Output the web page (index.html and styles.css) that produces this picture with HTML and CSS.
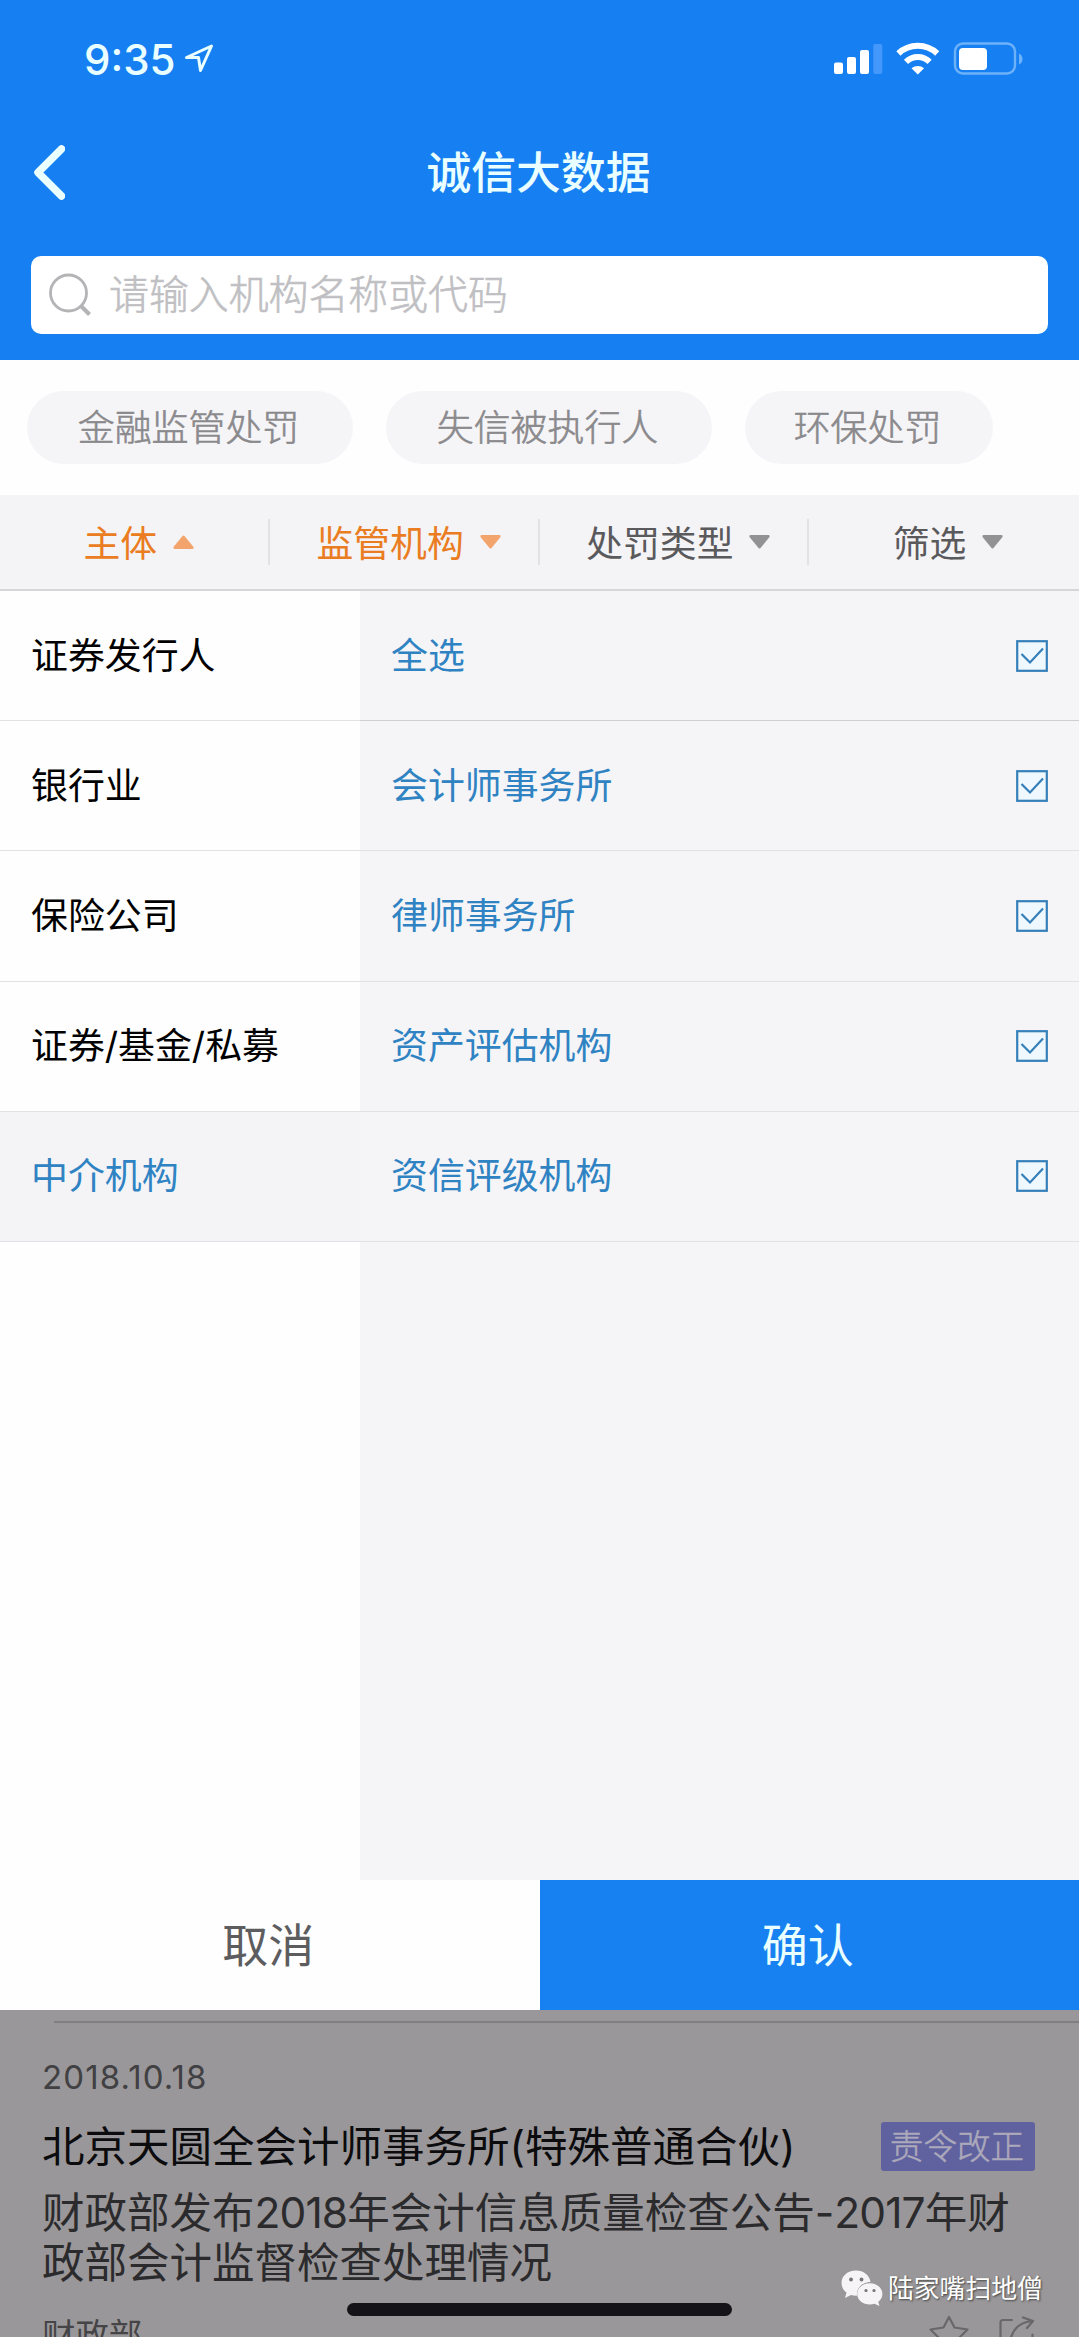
FILE: index.html
```html
<!DOCTYPE html>
<html lang="zh-CN">
<head>
<meta charset="utf-8">
<title>诚信大数据</title>
<link rel="stylesheet" href="styles.css">
</head>
<body>
<svg class="defs" width="0" height="0">
  <symbol id="check" viewBox="0 0 32 32">
    <rect x="1.2" y="1.2" width="29.6" height="29.6" fill="#eff8fe" stroke="#3580b9" stroke-width="2.2"/>
    <path d="M5.5 14 14 22.5 27 8.500" fill="none" stroke="#3580b9" stroke-width="2.2"/>
  </symbol>
</svg>
<div class="screen">
  <header class="header">
    <div class="status">
      <div class="status-left">
        <span class="time">9:35</span>
        <svg class="location" width="30" height="29" viewBox="0 0 30 29" fill="none" stroke="#eaffff" stroke-width="3" stroke-linejoin="round"><path d="M27.500 2 2.500 13.500H14.500L16.500 26.500Z"/></svg>
      </div>
      <svg class="signals" width="189" height="34" viewBox="0 0 189 34">
        <g fill="#fff">
          <rect x="0" y="20.500" width="9" height="11.500" rx="2"/>
          <rect x="13" y="15" width="9" height="17" rx="2"/>
          <rect x="26" y="8" width="9" height="24" rx="2"/>
        </g>
        <rect x="39.300" y="2" width="9" height="30" rx="2" fill="#4598fb"/>
        <g fill="none" stroke="#fff" stroke-width="6">
          <path d="M64.400 11.500A28.300 28.300 0 0 1 103.200 11.500"/>
          <path d="M72 19.800A17 17 0 0 1 95.600 19.800"/>
        </g>
        <path d="M77.500 26.300A9.500 9.500 0 0 1 90.100 26.300L83.800 32.500Z" fill="#fff"/>
        <rect x="121" y="1.500" width="60" height="30" rx="8" fill="none" stroke="#6db1f9" stroke-width="2.400"/>
        <rect x="125" y="6" width="28" height="22" rx="4" fill="#fff"/>
        <path d="M185 11.500Q188.500 13 188.500 17T185 22.500Z" fill="#6db1f9"/>
      </svg>
    </div>
    <div class="navbar">
      <svg class="back" width="34" height="60" viewBox="0 0 34 60" fill="none" stroke="#eaffff" stroke-width="7.500" stroke-linecap="round" stroke-linejoin="round"><path d="M30.500 6 7 29.500 30.500 53"/></svg>
      <h1 class="title">诚信大数据</h1>
    </div>
    <div class="search">
      <svg class="search-icon" width="44" height="44" viewBox="0 0 44 44" fill="none" stroke="#b4b4b6" stroke-width="2.800"><circle cx="20.500" cy="20" r="18"/><path d="M33 33 41.500 41.500" stroke-width="4"/></svg>
      <span class="placeholder">请输入机构名称或代码</span>
    </div>
  </header>

  <div class="chips">
    <span class="chip chip-long">金融监管处罚</span>
    <span class="chip chip-long">失信被执行人</span>
    <span class="chip">环保处罚</span>
  </div>

  <nav class="tabs">
    <div class="tab active"><span>主体</span><svg class="arrow" viewBox="0 0 21 14"><path d="M9.500 1Q10.500 0 11.500 1L20.500 12Q21 14 19.500 14H1.500Q0 14 .5 12Z"/></svg></div>
    <div class="tab active"><span>监管机构</span><svg class="arrow" viewBox="0 0 21 14"><path d="M9.500 13Q10.500 14 11.500 13L20.500 2Q21 0 19.500 0H1.500Q0 0 .5 2Z"/></svg></div>
    <div class="tab"><span>处罚类型</span><svg class="arrow" viewBox="0 0 21 14"><path d="M9.500 13Q10.500 14 11.500 13L20.500 2Q21 0 19.500 0H1.500Q0 0 .5 2Z"/></svg></div>
    <div class="tab"><span>筛选</span><svg class="arrow" viewBox="0 0 21 14"><path d="M9.500 13Q10.500 14 11.500 13L20.500 2Q21 0 19.500 0H1.500Q0 0 .5 2Z"/></svg></div>
  </nav>

  <div class="panel">
    <div class="categories">
      <div class="row"><span>证券发行人</span></div>
      <div class="row"><span>银行业</span></div>
      <div class="row"><span>保险公司</span></div>
      <div class="row"><span>证券/基金/私募</span></div>
      <div class="row selected"><span>中介机构</span></div>
    </div>
    <div class="options">
      <div class="row first"><span>全选</span><svg class="check"><use href="#check"/></svg></div>
      <div class="row"><span>会计师事务所</span><svg class="check"><use href="#check"/></svg></div>
      <div class="row"><span>律师事务所</span><svg class="check"><use href="#check"/></svg></div>
      <div class="row"><span>资产评估机构</span><svg class="check"><use href="#check"/></svg></div>
      <div class="row"><span>资信评级机构</span><svg class="check"><use href="#check"/></svg></div>
    </div>
  </div>

  <div class="actions">
    <div class="cancel">取消</div>
    <div class="confirm">确认</div>
  </div>

  <section class="feed">
    <div class="rule"></div>
    <div class="date">2018.10.18</div>
    <div class="headline"><span class="company">北京天圆全会计师事务所(特殊普通合伙)</span><span class="tag">责令改正</span></div>
    <div class="desc">财政部发布<span class="num">2018</span>年会计信息质量检查公告-<span class="num">2017</span>年财<br>政部会计监督检查处理情况</div>
    <div class="meta">
      <span class="source">财政部</span>
      <svg class="meta-icons" width="108" height="40" viewBox="0 0 108 40" fill="none" stroke="#69676a" stroke-width="2.200" stroke-linejoin="round" stroke-linecap="round">
        <path d="M20 2 25.500 12.500 38.500 14.500 29.500 23.500 31.500 36 20 30.500 8.500 36 10.500 23.500 1.500 14.500 14.500 12.500Z"/>
        <path d="M83 5H74Q71.500 5 71.500 7.500V34Q71.500 36.500 74 36.500H101Q103.500 36.500 103.500 34V19.500M81 27Q84 8 103 6M94 2.500 104 6 98 13"/>
      </svg>
    </div>
  </section>

  <div class="home-bar"></div>
  <div class="watermark">
    <svg width="42" height="36" viewBox="0 0 42 36">
      <path fill="#f6f4f7" d="M15 .5C6.500.5.5 6 .5 13c0 4 2 7.300 5 9.500L4 28l6-3q2.500.8 6 .7C15 18 21.500 12 29.500 12 28.500 5 22.500.5 15 .5Z"/>
      <path fill="#f6f4f7" d="M28.800 13.300c-7 0-12.600 4.700-12.600 10.600s5.600 10.500 12.600 10.500q2.500 0 4.700-.7l5 2.300-1.300-4.200c2.700-2 4.200-4.800 4.200-7.900 0-5.900-5.600-10.600-12.600-10.600Z"/>
      <g fill="#77757a"><circle cx="10" cy="9.500" r="1.900"/><circle cx="20.500" cy="9.500" r="1.900"/><circle cx="25" cy="20.500" r="1.600"/><circle cx="33" cy="20.500" r="1.600"/></g>
    </svg>
    <span>陆家嘴扫地僧</span>
  </div>
</div>
</body>
</html>
```
FILE: styles.css
```css
* { box-sizing: border-box; }

body {
  margin: 0;
  font-family: Inter, "Noto Sans CJK SC", sans-serif;
  color: #000;
}

.defs { position: absolute; }

.screen {
  position: relative;
  width: 1079px;
  height: 2337px;
  overflow: hidden;
  background: #fefefe;
  display: flex;
  flex-direction: column;
}

.header {
  height: 360px;
  flex: none;
  background: #1680f2;
  padding: 0 31px;
}

.status {
  height: 118px;
  display: flex;
  justify-content: space-between;
  padding: 42px 25px 0 53px;
}
.status-left { display: flex; gap: 11px; }
.time {
  height: 34px;
  line-height: 35px;
  font-size: 42px;
  font-weight: 500;
  width: 89px;
  white-space: nowrap;
  color: #eaffff;
}
.location { margin-top: 2px; }

.navbar {
  height: 109px;
  display: grid;
  grid-template-columns: 34px 1fr 36px;
  align-items: center;
}
.title {
  margin: 0;
  font-size: 44.8px;
  line-height: 60px;
  font-weight: 500;
  text-align: center;
  color: #eaffff;
}

.search {
  margin-top: 28.5px;
  height: 78.5px;
  border-radius: 10px;
  background: #fff;
  display: flex;
  align-items: center;
  gap: 17px;
  padding-left: 17px;
}
.placeholder {
  font-size: 39.9px;
  line-height: 60px;
  font-weight: 300;
  color: #bfbfc3;
  -webkit-text-stroke: .6px #bfbfc3;
}

.chips {
  height: 135px;
  flex: none;
  display: flex;
  gap: 33px;
  padding: 31px 27px 0;
}
.chip {
  width: 248px;
  height: 73px;
  border-radius: 37px;
  background: #f5f4f7;
  color: #8a898c;
  font-size: 36.9px;
  line-height: 74px;
  font-weight: 300;
  -webkit-text-stroke: .6px #8a898c;
  text-align: center;
  padding-right: 3px;
}
.chip-long { width: 326px; }

.tabs {
  height: 96px;
  flex: none;
  display: grid;
  grid-template-columns: repeat(4, 1fr);
  align-items: center;
  background: #f4f3f6;
  border-bottom: 2px solid #d6d5d9;
}
.tab {
  height: 46px;
  display: flex;
  align-items: center;
  justify-content: center;
  gap: 16px;
  padding-left: 10px;
  font-size: 36.8px;
  color: #5a595c;
  border-right: 2px solid #e2e1e5;
}
.tab span { padding-bottom: 3px; }
.tab:last-child { border-right-color: transparent; }
.tab.active { color: #ea7c22; }
.arrow { width: 21px; height: 14px; fill: #929194; }
.active .arrow { fill: #f3a46c; }

.panel {
  height: 1289px;
  flex: none;
  display: grid;
  grid-template-columns: 360px 1fr;
}
.options { background: #f5f4f6; color: #2f83c3; }
.row {
  height: 130.200px;
  display: flex;
  align-items: center;
  justify-content: space-between;
  padding: 0 31px;
  font-size: 36.9px;
  border-bottom: 1.500px solid #e2e1e5;
}
.row span { padding-bottom: 6px; }
.row.first { border-bottom-color: #cfced2; }
.row.selected { background: #f4f3f6; color: #2f83c3; }
.check { width: 32px; height: 32px; }

.actions {
  height: 130px;
  flex: none;
  display: grid;
  grid-template-columns: 1fr 1fr;
  font-size: 46px;
  line-height: 130px;
  text-align: center;
}
.actions div { padding-right: 3px; }
.cancel { background: #fefefe; color: #5d5c5e; }
.confirm { background: #1781f1; color: #eaffff; }

.feed {
  flex: 1;
  background: #999799;
  padding: 11px 42px 0;
  white-space: nowrap;
}
.rule { height: 2px; margin: 0 -42px 0 12px; background: #807e81; }
.date {
  margin-top: 34px;
  height: 40px;
  line-height: 40px;
  font-size: 33px;
  letter-spacing: 1.1px;
  color: #414043;
}
.headline {
  margin-top: 12.500px;
  height: 74px;
  display: flex;
  align-items: center;
  justify-content: space-between;
  padding-right: 2px;
  font-size: 42.500px;
  color: #0c0b0d;
}
.company { padding-bottom: 7px; }
.tag {
  width: 154px;
  height: 49px;
  line-height: 49px;
  border-radius: 3px;
  background: #6062a0;
  color: #aba9ba;
  font-size: 33.600px;
  font-weight: 300;
  -webkit-text-stroke: .5px #aba9ba;
  text-align: center;
  padding-right: 2px;
}
.desc {
  margin-top: 4.500px;
  font-size: 42.500px;
  line-height: 49.800px;
  color: #2b2a2c;
}
.num { letter-spacing: -.9px; }
.meta {
  margin-top: 24px;
  display: flex;
  justify-content: space-between;
}
.source { font-size: 33.400px; line-height: 46px; color: #454446; }
.meta-icons { margin-top: 3px; }

.home-bar {
  position: absolute;
  left: 347px;
  top: 2303px;
  width: 385px;
  height: 13px;
  border-radius: 7px;
  background: #151317;
}
.watermark {
  position: absolute;
  left: 841px;
  top: 2270px;
  display: flex;
  gap: 5px;
  font-size: 25.800px;
  line-height: 38px;
  color: #fff;
  text-shadow: 1px 1px 2px #444;
}
```
